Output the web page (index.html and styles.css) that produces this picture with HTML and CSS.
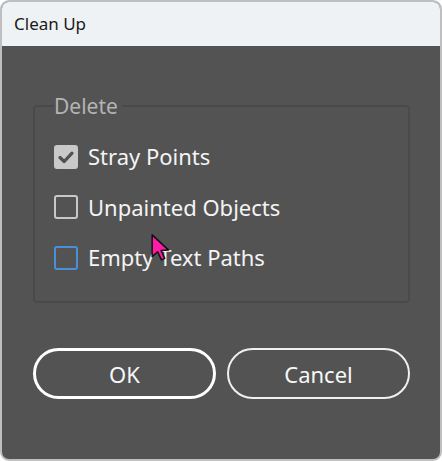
FILE: index.html
```html
<!DOCTYPE html>
<html>
<head>
<meta charset="utf-8">
<link rel="stylesheet" href="styles.css">
</head>
<body>
<div class="window">
  <div class="titlebar">Clean Up</div>
  <div class="content">
    <fieldset class="group">
      <legend>Delete</legend>
      <div class="row">
        <span class="box checked">
          <svg viewBox="0 0 24 24" width="24" height="24"><path d="M6 12.5 L10.2 16.5 L18 8.2" fill="none" stroke="#505050" stroke-width="3.2" stroke-linecap="round" stroke-linejoin="round"/></svg>
        </span>
        <span class="label">Stray Points</span>
      </div>
      <div class="row">
        <span class="box"></span>
        <span class="label">Unpainted Objects</span>
      </div>
      <div class="row">
        <span class="box focus"></span>
        <span class="label">Empty Text Paths</span>
      </div>
    </fieldset>
    <div class="buttons">
      <button class="btn primary">OK</button>
      <button class="btn">Cancel</button>
    </div>
  </div>
  <svg class="cursor" width="24" height="34" viewBox="0 0 22 30"><path d="M2 2 L2 22 L7 17.5 L10.5 25 L13.5 23.6 L10.2 16.4 L17 16 Z" fill="#ff1aa8" stroke="#111" stroke-width="1.4" stroke-linejoin="round"/></svg>
</div>
</body>
</html>
```

FILE: styles.css
```css
html, body {
  margin: 0;
  padding: 0;
  background: #ffffff;
}
body {
  font-family: "Noto Sans", "Open Sans", sans-serif;
}
.window {
  position: relative;
  width: 442px;
  height: 461px;
  box-sizing: border-box;
  border: 2px solid #bfbfbf;
  border-radius: 9px;
  overflow: hidden;
  display: flex;
  flex-direction: column;
  background: #535353;
}
.titlebar {
  height: 44px;
  flex: none;
  background: #eff2f5;
  color: #1a1a1a;
  font-size: 17px;
  line-height: 44px;
  padding-left: 12px;
}
.content {
  flex: 1;
  padding: 0 30px 0 31px;
  display: flex;
  flex-direction: column;
}
.group {
  margin: 49px 0 0 0;
  padding: 27px 0 0 19px;
  height: 208px;
  box-sizing: border-box;
  border: 2px solid #4a4a4a;
  border-radius: 4px;
  min-inline-size: 0;
}
.group legend {
  padding: 0 4px 0 0;
  margin-left: 0;
  color: #b4b4b4;
  font-size: 21px;
  line-height: 22px;
}
.row {
  display: flex;
  align-items: center;
  height: 25px;
  margin-bottom: 25.5px;
}
.box {
  width: 24px;
  height: 24px;
  box-sizing: border-box;
  border: 2px solid #c8c8c8;
  border-radius: 3px;
  flex: none;
  display: flex;
  align-items: center;
  justify-content: center;
}
.box.checked {
  background: #c9c9c9;
  border-color: #c9c9c9;
}
.box.checked svg {
  margin: -2px;
}
.box.focus {
  border-color: #4a8fd8;
}
.label {
  margin-left: 10px;
  color: #f4f4f4;
  font-size: 22px;
  line-height: 25px;
}
.buttons {
  display: flex;
  gap: 11px;
  margin-top: 45px;
}
.btn {
  width: 183px;
  height: 51px;
  box-sizing: border-box;
  border: 2px solid #f0f0f0;
  border-radius: 26px;
  background: #535353;
  color: #f7f7f7;
  font-family: "Noto Sans", "Open Sans", sans-serif;
  font-size: 22px;
  padding: 0;
}
.btn.primary {
  border: 3px solid #ffffff;
}
.cursor {
  position: absolute;
  left: 148px;
  top: 230px;
}
```
